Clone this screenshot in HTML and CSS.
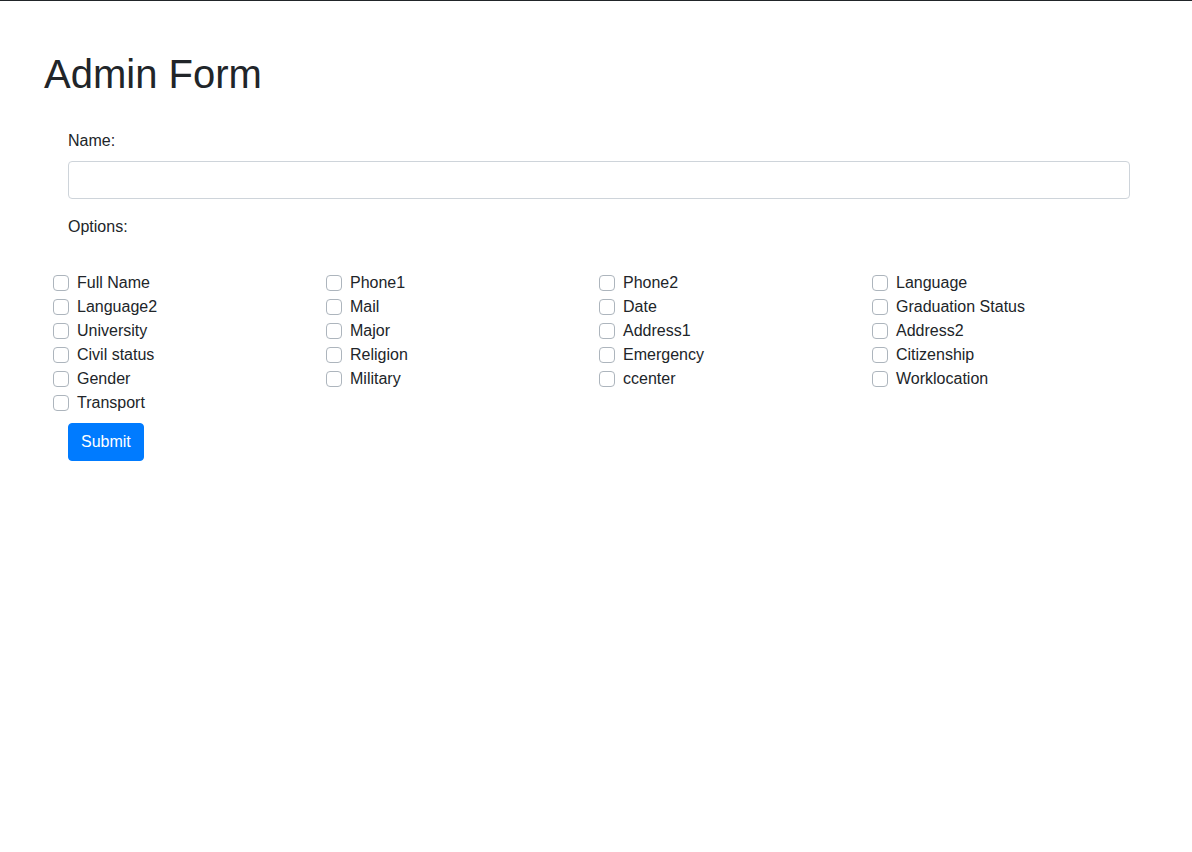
FILE: index.html
```html
<!DOCTYPE html>
<html lang="en">
<head>
<meta charset="utf-8">
<title>Admin Form</title>
<link rel="stylesheet" href="styles.css">
</head>
<body>
<div class="page">
  <h1 class="title">Admin Form</h1>
  <form class="form">
    <div class="group">
      <label class="label" for="name">Name:</label>
      <input class="input" type="text" id="name">
    </div>
    <div class="label">Options:</div>
    <div class="options">
      <label class="check"><input type="checkbox"><span>Full Name</span></label>
      <label class="check"><input type="checkbox"><span>Phone1</span></label>
      <label class="check"><input type="checkbox"><span>Phone2</span></label>
      <label class="check"><input type="checkbox"><span>Language</span></label>
      <label class="check"><input type="checkbox"><span>Language2</span></label>
      <label class="check"><input type="checkbox"><span>Mail</span></label>
      <label class="check"><input type="checkbox"><span>Date</span></label>
      <label class="check"><input type="checkbox"><span>Graduation Status</span></label>
      <label class="check"><input type="checkbox"><span>University</span></label>
      <label class="check"><input type="checkbox"><span>Major</span></label>
      <label class="check"><input type="checkbox"><span>Address1</span></label>
      <label class="check"><input type="checkbox"><span>Address2</span></label>
      <label class="check"><input type="checkbox"><span>Civil status</span></label>
      <label class="check"><input type="checkbox"><span>Religion</span></label>
      <label class="check"><input type="checkbox"><span>Emergency</span></label>
      <label class="check"><input type="checkbox"><span>Citizenship</span></label>
      <label class="check"><input type="checkbox"><span>Gender</span></label>
      <label class="check"><input type="checkbox"><span>Military</span></label>
      <label class="check"><input type="checkbox"><span>ccenter</span></label>
      <label class="check"><input type="checkbox"><span>Worklocation</span></label>
      <label class="check"><input type="checkbox"><span>Transport</span></label>
    </div>
    <button class="submit" type="submit">Submit</button>
  </form>
</div>
</body>
</html>
```
FILE: styles.css
```css
* { box-sizing: border-box; }
html, body {
  margin: 0;
  background: #fff;
}
body {
  font-family: "Liberation Sans", Arial, sans-serif;
  font-size: 16px;
  line-height: 24px;
  color: #212529;
  border-top: 1px solid #212529;
}
.page {
  padding: 49px 0 0 44px;
}
.title {
  margin: 0 0 31px 0;
  font-size: 40px;
  line-height: 48px;
  font-weight: 500;
}
.form {
  margin-left: 24px;
  width: 1062px;
}
.group {
  margin-bottom: 16px;
}
.label {
  display: block;
  margin-bottom: 8px;
}
.input {
  display: block;
  width: 100%;
  height: 38px;
  padding: 6px 12px;
  font: inherit;
  color: #495057;
  border: 1px solid #ced4da;
  border-radius: 4px;
  background: #fff;
}
.options {
  margin: 32px -15px 8px -15px;
  display: grid;
  grid-template-columns: repeat(4, 1fr);
}
.check {
  display: flex;
  align-items: center;
  gap: 8px;
  height: 24px;
}
.check input {
  appearance: none;
  -webkit-appearance: none;
  margin: 0;
  width: 16px;
  height: 16px;
  border: 1px solid #adb5bd;
  border-radius: 4px;
  background: #fff;
  flex: none;
}
.submit {
  display: inline-block;
  height: 38px;
  padding: 6px 12px;
  font: inherit;
  color: #fff;
  background: #007bff;
  border: 1px solid #007bff;
  border-radius: 4px;
}
```
